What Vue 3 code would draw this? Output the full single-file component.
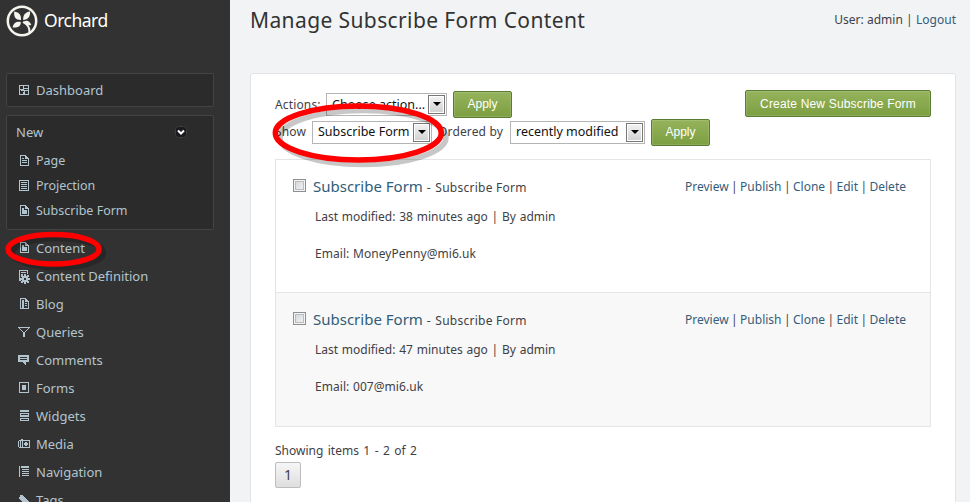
<script setup>
const newItems = [
  { label: 'Page', icon: 'page' },
  { label: 'Projection', icon: 'list' },
  { label: 'Subscribe Form', icon: 'doc' },
]
const navItems = [
  { label: 'Content', icon: 'doc' },
  { label: 'Content Definition', icon: 'definition' },
  { label: 'Blog', icon: 'blog' },
  { label: 'Queries', icon: 'filter' },
  { label: 'Comments', icon: 'comment' },
  { label: 'Forms', icon: 'form' },
  { label: 'Widgets', icon: 'widgets' },
  { label: 'Media', icon: 'media' },
  { label: 'Navigation', icon: 'navigation' },
  { label: 'Tags', icon: 'tag' },
]
// Filled shapes on a 12 x 12 pixel grid
const icons = {
  dashboard: 'M1 1h10v10H1zM2 2v3h3V2zM6 2v2h4V2zM2 6v4h3V8h1V7H3V6zM6 5v1h4V5zM7 7v3h3V7z',
  page: 'M2 0h6v1h1v1h1v1h1v8H2zM3 1v9h7V4H7V1zM4 3h2v1H4zM4 5h5v1H4zM4 7h5v1H4z',
  list: 'M1 0h10v11H1zM2 1v9h8V1zM3 2h6v1H3zM3 4h6v1H3zM3 6h6v1H3zM3 8h6v1H3z',
  doc: 'M2 0h6v1h1v1h1v1h1v8H2zM3 1v9h7V4H7V1zM4 3h2v2h3v4H4z',
  definition: 'M1 0h9v4H9V1H2v9h1v1H1zM3 2h5v1H3zM3 4h2v1H3zM6 4h2v2h1V5h2v2h-1v1h2v2h-2v1h1v2H9v-1H8v2H6v-2H5v1H3v-2h1v-1H2V8h2V7H3V5h2v1h1zM6 8v2h2V8z',
  blog: 'M2 0h6v1h1v1h1v1h1v8H2zM3 1v9h1V2h2v8h4V4H7V1zM7 5h2v1H7zM7 7h2v1H7z',
  filter: 'M0 1h12v1h-1v1h-1v1H9v1H8v1H7v5H5V6H4V5H3V4H2V3H1V2H0zM2 2v1h1v1h1v1h1v1h2V5h1V4h1V3h1V2z',
  comment: 'M0 1h11v7H8v3H7v-1H6V9H5V8H0zM2 3v1h7V3zM2 5v1h7V5z',
  form: 'M1 0h10v11H1zM2 1v9h8V1zM4 3h4v5H4z',
  widgets: 'M2 0h9v2H2zM2 3h9v4H2zM3 4v1h7V4zM2 8h9v3H2zM3 9v1h7V9z',
  media: 'M3 1h2v1h7v8H1V9H0V3h1V2h2zM1 3v6h1V3zM3 3v6h8V3zM4 3h1v6H4zM7 4h2v1h1v2H9v1H7V7H6V5h1z',
  navigation: 'M1 0h1v11H1zM3 0h8v2H3zM4 3h7v1H4zM4 5h7v1H4zM4 7h7v1H4zM4 9h7v1H4z',
  tag: 'M2 1h3v1h1v1h1v1h1v1h1v1h1v1h1v1h1v1h-1v1h-1v1H9v1H7v-1H6v-1H5V8H4V7H3V6H2V5H1V3h1z',
}
const entries = [
  { time: '38 minutes ago', email: 'MoneyPenny@mi6.uk' },
  { time: '47 minutes ago', email: '007@mi6.uk' },
]
const actions = ['Preview', 'Publish', 'Clone', 'Edit', 'Delete']
</script>

<template>
  <div class="app">
    <aside class="sidebar">
      <div class="brand">
        <svg class="logo" viewBox="0 0 32 32">
          <circle cx="16" cy="16" r="14.2" />
          <path class="stem" d="M17 17C21.500 19.500 24 22 23.500 28" />
          <path class="leaf" d="M15 15C9.500 15 7.500 11.500 8.300 6.500C13.300 7.500 15.500 10 15 15zM17.200 15C17 10 19 7.200 24 6.500C24.500 11.500 22 14.500 17.200 15zM14.800 17C15 21.300 12 23 6.500 22.500C7.500 18 10 16.200 14.800 17zM17.800 16.500C21 14.600 24 16.200 25.300 20C21.500 20.800 19 19.500 17.800 16.500z" />
        </svg>
        <span class="brand-name">Orchard</span>
      </div>
      <div class="box dash">
        <svg class="icon" viewBox="0 0 12 12"><path :d="icons.dashboard" /></svg>
        <span>Dashboard</span>
      </div>
      <div class="box new">
        <div class="new-head">
          <span>New</span>
          <svg class="toggle" viewBox="0 0 12 12"><rect x=".5" y=".5" width="11" height="11" rx="3" /><path d="M3 4.500L6 7.500L9 4.500" /></svg>
        </div>
        <div v-for="i in newItems" :key="i.label" class="new-row">
          <svg class="icon" viewBox="0 0 12 12"><path :d="icons[i.icon]" /></svg>
          <span>{{ i.label }}</span>
        </div>
      </div>
      <nav>
        <div v-for="i in navItems" :key="i.label" class="nav-row">
          <svg class="icon" viewBox="0 0 12 12"><path :d="icons[i.icon]" /></svg>
          <span>{{ i.label }}</span>
        </div>
      </nav>
    </aside>

    <main class="main">
      <header class="header">
        <h1>Manage Subscribe Form Content</h1>
        <div class="user">User: admin | <a>Logout</a></div>
      </header>
      <section class="card">
        <div class="toolbar">
          <div class="filters">
            <div class="line">
              <span class="label actions-label">Actions:</span>
              <div class="select choose"><span>Choose action...</span><i class="arrow"></i></div>
              <button class="btn">Apply</button>
            </div>
            <div class="line">
              <span class="label show-label">Show</span>
              <div class="select type"><span>Subscribe Form</span><i class="arrow"></i></div>
              <span class="label order-label">Ordered by</span>
              <div class="select order"><span>recently modified</span><i class="arrow"></i></div>
              <button class="btn">Apply</button>
            </div>
          </div>
          <button class="btn create">Create New Subscribe Form</button>
        </div>
        <ul class="list">
          <li v-for="e in entries" :key="e.email">
            <div class="item-head">
              <i class="check"></i>
              <a class="title">Subscribe Form</a>
              <span class="kind"><b>-</b> Subscribe Form</span>
              <div class="links">
                <template v-for="(a, n) in actions" :key="a"><span v-if="n"> | </span><a>{{ a }}</a></template>
              </div>
            </div>
            <p class="meta">Last modified: {{ e.time }} | By admin</p>
            <p class="email">Email: {{ e.email }}</p>
          </li>
        </ul>
        <div class="showing">Showing items 1 - 2 of 2</div>
        <div class="pager">1</div>
      </section>
    </main>

    <svg class="marks" viewBox="0 0 970 502">
      <g class="shade">
        <ellipse cx="363" cy="137.500" rx="83" ry="27" />
        <ellipse cx="58" cy="253" rx="45.500" ry="14.600" />
      </g>
      <g class="ring">
        <ellipse cx="358.300" cy="133" rx="83" ry="27" />
        <ellipse cx="53.600" cy="249.300" rx="45.500" ry="14.700" />
      </g>
    </svg>
  </div>
</template>

<style>
body { margin: 0; overflow: hidden; }
</style>

<style scoped>
* { box-sizing: border-box; }
.app { position: relative; display: flex; width: 970px; height: 502px; overflow: hidden; background: #f2f3f5; font: 12px/18px "Noto Sans", "Open Sans", sans-serif; color: #3f3f46; white-space: nowrap; }
.sidebar { width: 230px; height: 502px; overflow: hidden; flex: none; background: #323232; color: #b2c5cf; padding: 0 16px 0 6px; font-size: 13px; }
.brand { display: flex; align-items: center; height: 41px; margin-bottom: 32px; }
.logo { width: 32px; height: 32px; flex: none; }
.logo circle { fill: none; stroke: #f5f5ee; stroke-width: 2.5; }
.logo .stem { fill: none; stroke: #f5f5ee; stroke-width: 2; }
.logo .leaf { fill: #f5f5ee; }
.brand-name { font-size: 17.500px; color: #fff; margin-left: 6px; letter-spacing: -.5px; margin-bottom: 1px; }
.box { width: 208px; border: 1px solid #434343; border-radius: 2px; background: #2b2b2b; }
.dash { height: 34px; display: flex; align-items: center; padding-left: 11px; }
.new { margin-top: 8px; height: 115px; padding-top: 2px; margin-bottom: 4px; }
.new-head { height: 27px; display: flex; align-items: center; justify-content: space-between; padding: 0 26px 0 9px; margin-bottom: 3px; }
.toggle { width: 12px; height: 12px; }
.toggle rect { fill: #1b1b1f; stroke: #3c3c40; }
.toggle path { fill: none; stroke: #fff; stroke-width: 2; }
.new-row { height: 25px; display: flex; align-items: center; padding-left: 11px; font-size: 12.500px; }
.nav-row { height: 28px; display: flex; align-items: center; padding-left: 12px; }
.icon { width: 12px; height: 12px; margin-right: 6px; flex: none; overflow: visible; fill: #b2c5cf; fill-rule: evenodd; shape-rendering: crispEdges; }
.main { flex: 1; padding: 0 14px 0 20px; }
.header { display: flex; justify-content: space-between; align-items: center; height: 40px; margin-bottom: 33px; }
h1 { margin: 0; font-size: 21px; font-weight: 400; color: #333; line-height: 30px; letter-spacing: .39px; }
a { color: #365c7a; }
.user { letter-spacing: .03px; }
.card { height: 450px; background: #fff; border: 1px solid #e2e3e6; border-radius: 3px; padding: 16px 24px 0; }
.toolbar { display: flex; justify-content: space-between; align-items: flex-start; height: 69px; }
.line { display: flex; align-items: center; height: 28px; }
.label { flex: none; letter-spacing: .15px; }
.actions-label { width: 51px; padding-top: 2px; }
.show-label { width: 37px; }
.order-label { width: 72px; margin-left: 6px; }
.select { height: 23px; border: 1px solid #b5b5b5; background: #fff; color: #111; display: flex; align-items: center; justify-content: space-between; padding: 0 1px 0 5px; font-size: 12.500px; }
.choose { width: 121px; }
.choose span { padding-top: 1px; }
.type { width: 120px; }
.order { width: 135px; }
.arrow { width: 17px; height: 19px; flex: none; border: 1px solid #777; box-shadow: inset 0 0 0 1px #fff; background: linear-gradient(#f3f3f3, #d0d0d0); display: flex; align-items: center; justify-content: center; }
.arrow::after { content: ""; border: 4px solid transparent; border-top-color: #000; border-bottom: 0; }
.btn { width: 59px; height: 27px; margin: 0 0 0 6px; padding: 0; border: 1px solid #5a7c32; border-radius: 2px; background: linear-gradient(#95b35c, #7c9f41); box-shadow: inset 0 0 0 1px rgba(255,255,255,.13); color: #fff; font: 12px "Liberation Sans", sans-serif; }
.create { width: 186px; letter-spacing: .18px; }
.list { list-style: none; margin: 0; padding: 0; border: 1px solid #e4e5e6; }
li { height: 132px; padding: 17px 24px 0 17px; }
li + li { height: 134px; border-top: 1px solid #e4e5e6; background: #f8f8f8; }
.item-head { display: flex; align-items: center; height: 20px; }
.check { width: 13px; height: 13px; margin-bottom: 3px; border: 1px solid #8e8f8f; box-shadow: inset 0 0 0 1px #f4f4f4, inset 0 0 0 2px #b8bcc0; background: linear-gradient(135deg, #cfd2d6, #f6f6f6); }
.title { font-size: 15px; margin-left: 7px; margin-bottom: 2px; color: #2f5d78; }
.kind { margin-left: 4px; padding-top: 2px; letter-spacing: .25px; }
.kind b { font-weight: 400; margin-right: 1px; }
.links { margin-left: auto; white-space: pre; word-spacing: -.7px; }
p { margin: 0 0 0 22px; }
.meta { margin-top: 11px; word-spacing: .65px; }
.email { margin-top: 19px; word-spacing: .5px; letter-spacing: .05px; }
.showing { margin-top: 15px; word-spacing: 1.3px; }
.pager { width: 26px; height: 26px; margin-top: 2px; border: 1px solid #bdbdbd; border-radius: 2px; background: linear-gradient(#f6f6f6, #dedede); display: flex; align-items: center; justify-content: center; font-size: 14px; }
.marks { position: absolute; inset: 0; width: 970px; height: 502px; pointer-events: none; }
.marks ellipse { fill: none; stroke-width: 5.500; }
.shade { stroke: rgba(0,0,0,.22); }
.ring { stroke: #f00; }
</style>
